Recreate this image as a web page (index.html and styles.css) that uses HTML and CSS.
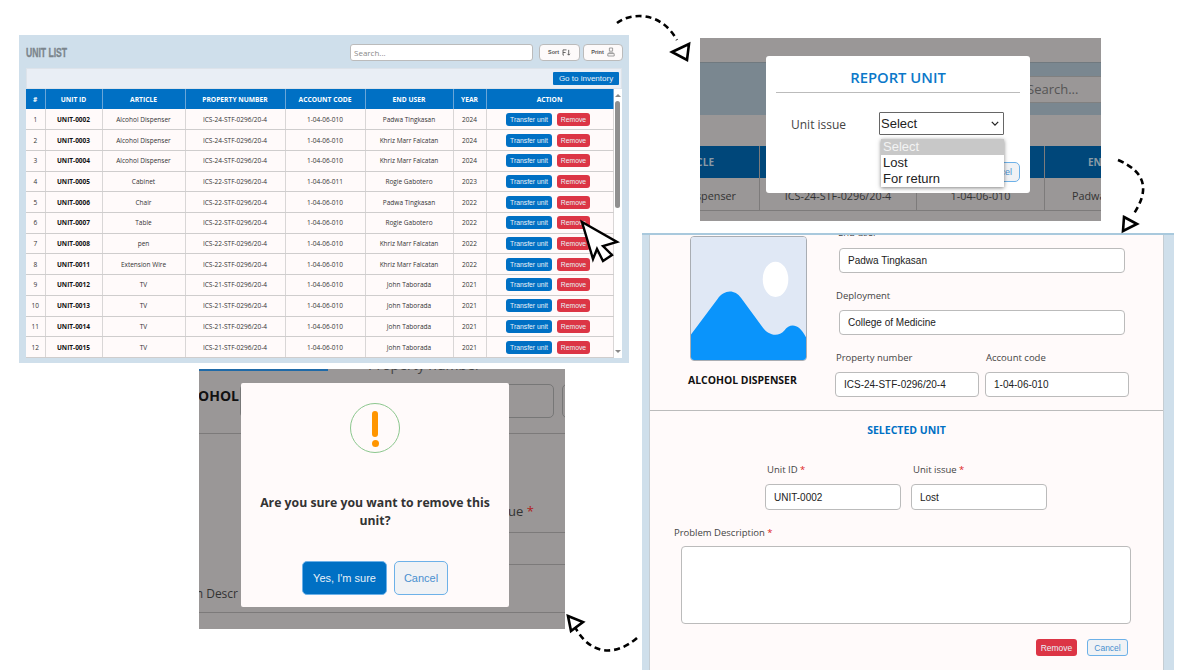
FILE: index.html
```html
<!DOCTYPE html>
<html lang="en">
<head>
    <meta charset="UTF-8">
    <meta name="viewport" content="width=device-width, initial-scale=1.0">
    <title>Unit List</title>
    <link rel="stylesheet" href="styles.css">
</head>
<body>
<div class="canvas">

    <!-- unit list window -->
    <section class="win list-win">
        <div class="list-head">
            <h2 class="list-title"><span>UNIT LIST</span></h2>
            <input class="search" type="text" placeholder="Search...">
            <button class="tool-btn tool-sort">Sort
                <svg viewBox="0 0 10 8" width="9" height="7"><path d="M1 1h4M1 1v6M1 4h3M1 7h1M7.5 1v6M6 5.5L7.5 7 9 5.5" fill="none" stroke="#555" stroke-width="1"/></svg>
            </button>
            <button class="tool-btn tool-print">Print
                <svg viewBox="0 0 10 12" width="8" height="10"><path d="M3 1h4v4H3zM2 7h6M1 8h8v3H1z" fill="none" stroke="#888" stroke-width="1"/></svg>
            </button>
        </div>
        <div class="list-bar"><button class="btn-blue btn-inventory">Go to inventory</button></div>
        <div class="table-wrap">
            <table class="units">
                <colgroup>
                    <col class="c-no"><col class="c-id"><col class="c-art"><col class="c-prop"><col class="c-acc"><col class="c-user"><col class="c-year"><col class="c-act">
                </colgroup>
                <thead>
                    <tr><th>#</th><th>UNIT ID</th><th>ARTICLE</th><th>PROPERTY NUMBER</th><th>ACCOUNT CODE</th><th>END USER</th><th>YEAR</th><th>ACTION</th></tr>
                </thead>
                <tbody>
                    <tr><td>1</td><td class="uid">UNIT-0002</td><td>Alcohol Dispenser</td><td>ICS-24-STF-0296/20-4</td><td>1-04-06-010</td><td>Padwa Tingkasan</td><td>2024</td><td class="act"><button class="btn-blue">Transfer unit</button><button class="btn-red">Remove</button></td></tr>
                    <tr><td>2</td><td class="uid">UNIT-0003</td><td>Alcohol Dispenser</td><td>ICS-24-STF-0296/20-4</td><td>1-04-06-010</td><td>Khriz Marr Falcatan</td><td>2024</td><td class="act"><button class="btn-blue">Transfer unit</button><button class="btn-red">Remove</button></td></tr>
                    <tr><td>3</td><td class="uid">UNIT-0004</td><td>Alcohol Dispenser</td><td>ICS-24-STF-0296/20-4</td><td>1-04-06-010</td><td>Khriz Marr Falcatan</td><td>2024</td><td class="act"><button class="btn-blue">Transfer unit</button><button class="btn-red">Remove</button></td></tr>
                    <tr><td>4</td><td class="uid">UNIT-0005</td><td>Cabinet</td><td>ICS-22-STF-0296/20-4</td><td>1-04-06-011</td><td>Rogie Gabotero</td><td>2023</td><td class="act"><button class="btn-blue">Transfer unit</button><button class="btn-red">Remove</button></td></tr>
                    <tr><td>5</td><td class="uid">UNIT-0006</td><td>Chair</td><td>ICS-22-STF-0296/20-4</td><td>1-04-06-010</td><td>Padwa Tingkasan</td><td>2022</td><td class="act"><button class="btn-blue">Transfer unit</button><button class="btn-red">Remove</button></td></tr>
                    <tr><td>6</td><td class="uid">UNIT-0007</td><td>Table</td><td>ICS-22-STF-0296/20-4</td><td>1-04-06-010</td><td>Rogie Gabotero</td><td>2022</td><td class="act"><button class="btn-blue">Transfer unit</button><button class="btn-red">Remove</button></td></tr>
                    <tr><td>7</td><td class="uid">UNIT-0008</td><td>pen</td><td>ICS-22-STF-0296/20-4</td><td>1-04-06-010</td><td>Khriz Marr Falcatan</td><td>2022</td><td class="act"><button class="btn-blue">Transfer unit</button><button class="btn-red">Remove</button></td></tr>
                    <tr><td>8</td><td class="uid">UNIT-0011</td><td>Extension Wire</td><td>ICS-22-STF-0296/20-4</td><td>1-04-06-010</td><td>Khriz Marr Falcatan</td><td>2022</td><td class="act"><button class="btn-blue">Transfer unit</button><button class="btn-red">Remove</button></td></tr>
                    <tr><td>9</td><td class="uid">UNIT-0012</td><td>TV</td><td>ICS-21-STF-0296/20-4</td><td>1-04-06-010</td><td>John Taborada</td><td>2021</td><td class="act"><button class="btn-blue">Transfer unit</button><button class="btn-red">Remove</button></td></tr>
                    <tr><td>10</td><td class="uid">UNIT-0013</td><td>TV</td><td>ICS-21-STF-0296/20-4</td><td>1-04-06-010</td><td>John Taborada</td><td>2021</td><td class="act"><button class="btn-blue">Transfer unit</button><button class="btn-red">Remove</button></td></tr>
                    <tr><td>11</td><td class="uid">UNIT-0014</td><td>TV</td><td>ICS-21-STF-0296/20-4</td><td>1-04-06-010</td><td>John Taborada</td><td>2021</td><td class="act"><button class="btn-blue">Transfer unit</button><button class="btn-red">Remove</button></td></tr>
                    <tr><td>12</td><td class="uid">UNIT-0015</td><td>TV</td><td>ICS-21-STF-0296/20-4</td><td>1-04-06-010</td><td>John Taborada</td><td>2021</td><td class="act"><button class="btn-blue">Transfer unit</button><button class="btn-red">Remove</button></td></tr>
                </tbody>
            </table>
            <div class="scrollbar">
                <span class="arrow-up"></span>
                <span class="thumb"></span>
                <span class="arrow-down"></span>
            </div>
        </div>
    </section>

    <!-- report unit window -->
    <section class="win report-win">
        <div class="rp-gap"></div>
        <div class="rp-band"><span class="rp-search">Search...</span></div>
        <div class="rp-gray"></div>
        <div class="rp-row rp-header">
            <span class="rp-cell rp-c1">ARTICLE</span>
            <span class="rp-cell"></span>
            <span class="rp-cell"></span>
            <span class="rp-cell rp-c4">END USER</span>
        </div>
        <div class="rp-row rp-data">
            <span class="rp-cell rp-c1b">Alcohol Dispenser</span>
            <span class="rp-cell rp-mid">ICS-24-STF-0296/20-4</span>
            <span class="rp-cell rp-mid">1-04-06-010</span>
            <span class="rp-cell rp-c4b">Padwa Tingkasan</span>
        </div>
        <div class="report-modal">
            <h3 class="report-title">REPORT UNIT</h3>
            <div class="report-field">
                <label class="report-label">Unit issue</label>
                <div class="select-box">
                    <select class="report-select"><option>Select</option></select>
                    <svg class="chevron" viewBox="0 0 10 6" width="8" height="5"><path d="M1 1l4 4 4-4" fill="none" stroke="#222" stroke-width="1.6"/></svg>
                </div>
            </div>
            <div class="report-foot"><button class="btn-ghost">Cancel</button></div>
            <ul class="dropdown">
                <li class="active">Select</li>
                <li>Lost</li>
                <li>For return</li>
            </ul>
        </div>
    </section>

    <!-- selected unit form window -->
    <section class="win form-win">
        <div class="form-inner">
            <div class="form-top">
                <div class="unit-pic">
                    <svg class="pic" viewBox="0 0 117 125" width="117" height="125">
                        <rect width="117" height="125" fill="#e0e8f5"/>
                        <ellipse cx="86" cy="43" rx="13" ry="18" fill="#fff"/>
                        <path d="M0 99L27 63C33 54 44 52 51 62L73 92C78 99 88 103 95 95C101 87 110 88 117 102V125H0Z" fill="#0a94fb"/>
                    </svg>
                    <div class="unit-name">ALCOHOL DISPENSER</div>
                </div>
                <div class="unit-fields">
                    <label class="lbl lbl-clipped">End user</label>
                    <input class="box box-wide" value="Padwa Tingkasan">
                    <label class="lbl lbl-dep">Deployment</label>
                    <input class="box box-wide" value="College of Medicine">
                    <div class="two-col">
                        <div>
                            <label class="lbl lbl-prop">Property number</label>
                            <input class="box box-half" value="ICS-24-STF-0296/20-4">
                        </div>
                        <div>
                            <label class="lbl lbl-prop">Account code</label>
                            <input class="box box-half" value="1-04-06-010">
                        </div>
                    </div>
                </div>
            </div>
            <div class="form-bottom">
                <h4 class="selected-title">SELECTED UNIT</h4>
                <div class="sel-row">
                    <div>
                        <label class="lbl lbl-sel">Unit ID <b>*</b></label>
                        <input class="box box-sel" value="UNIT-0002">
                    </div>
                    <div>
                        <label class="lbl lbl-sel">Unit issue <b>*</b></label>
                        <input class="box box-sel" value="Lost">
                    </div>
                </div>
                <label class="lbl lbl-desc">Problem Description <b>*</b></label>
                <textarea class="box desc"></textarea>
                <div class="form-actions">
                    <button class="btn-red btn-form">Remove</button>
                    <button class="btn-ghost btn-form">Cancel</button>
                </div>
            </div>
        </div>
    </section>

    <!-- remove confirmation window -->
    <section class="win confirm-win">
        <div class="bk-bar"></div>
        <div class="bk-label">Property number</div>
        <div class="bk-row">
            <span class="bk-name">ALCOHOL</span>
            <span class="bk-input"></span>
            <span class="bk-input2"></span>
        </div>
        <div class="bk-mid">ue <b>*</b></div>
        <div class="bk-field"></div>
        <div class="bk-desc"><span>Problem Descr</span></div>
        <div class="confirm-modal">
            <div class="alert-ring"><span class="alert-bar"></span><span class="alert-dot"></span></div>
            <p class="confirm-text">Are you sure you want to remove this unit?</p>
            <div class="confirm-actions">
                <button class="btn-yes">Yes, I'm sure</button>
                <button class="btn-ghost btn-no">Cancel</button>
            </div>
        </div>
    </section>

    <!-- dashed arrows and the pointer drawn over the windows -->
    <svg class="overlay" viewBox="0 0 1183 670" width="1183" height="670">
        <g fill="none" stroke="#000" stroke-width="2.6">
            <path d="M617 23C630 13 660 10 677 40" stroke-dasharray="6 4"/>
            <path d="M672 52L689 44L687 60Z"/>
            <path d="M1118 160C1146 172 1150 190 1133 215" stroke-dasharray="6 4"/>
            <path d="M1124 217L1137 224L1123 231Z"/>
            <path d="M637 638C615 657 590 655 575 627" stroke-dasharray="6 4"/>
            <path d="M568 616L583 622L571 631Z"/>
        </g>
        <path d="M582 222L617 242L603 246L612 255L603 261L597 249L593 259Z" fill="#fff" stroke="#000" stroke-width="2.4" stroke-linejoin="miter"/>
    </svg>
</div>
</body>
</html>
```

FILE: styles.css
```css
* {
    box-sizing: border-box;
}
body {
    margin: 0;
    background: white;
    font-family: "Liberation Sans", Arial, sans-serif;
}
button {
    font-family: "Liberation Sans", Arial, sans-serif;
    cursor: pointer;
}
.canvas {
    position: relative;
    width: 1183px;
    height: 670px;
    overflow: hidden;
    background: white;
}
.win {
    position: absolute;
    overflow: hidden;
}
.overlay {
    position: absolute;
    left: 0;
    top: 0;
    pointer-events: none;
}

/* unit list */
.list-win {
    left: 19px;
    top: 35px;
    width: 610px;
    height: 328px;
    padding: 0 7px;
    background: #cfdfeb;
}
.list-head {
    display: flex;
    align-items: center;
    height: 33px;
    margin-right: -1px;
    padding-top: 1px;
}
.list-title {
    margin: 0 auto 0 0;
    font-size: 13px;
    font-weight: bold;
    color: #7b858c;
    -webkit-text-stroke: 0.4px #7b858c;
}
.list-title span {
    display: inline-block;
    transform: scaleX(0.66);
    transform-origin: left center;
}
.search {
    width: 183px;
    height: 17px;
    padding: 0 3px;
    font-size: 8px;
    font-family: "Open Sans", sans-serif;
    background: white;
    border: 1px solid #bbb;
    border-radius: 3px;
}
.search::placeholder {
    color: #888;
}
.tool-btn {
    display: flex;
    align-items: center;
    justify-content: center;
    gap: 3px;
    width: 41px;
    height: 17px;
    margin-left: 3px;
    padding: 0;
    font-size: 5.5px;
    font-weight: bold;
    color: #555;
    background: #fdfafa;
    border: 1px solid #bbb;
    border-radius: 4px;
}
.tool-sort {
    margin-left: 6px;
}
.tool-print {
    width: 40px;
}
.list-bar {
    display: flex;
    justify-content: flex-end;
    align-items: center;
    height: 21px;
    padding-right: 2px;
    background: #e9eef5;
    border: 1px solid #dde3ea;
}
.table-wrap {
    display: flex;
    height: 269px;
    overflow: hidden;
    background: #fffafa;
}
.units {
    flex: none;
    width: 587px;
    height: 269px;
    table-layout: fixed;
    border-collapse: collapse;
    font-family: "Open Sans", sans-serif;
    font-size: 6.5px;
    color: #333;
}
.c-no { width: 19px; }
.c-id { width: 57px; }
.c-art { width: 83px; }
.c-prop { width: 100px; }
.c-acc { width: 80px; }
.c-user { width: 88px; }
.c-year { width: 33px; }
.c-act { width: 127px; }
.units th {
    height: 20px;
    padding: 0;
    font-size: 6.7px;
    font-weight: bold;
    color: white;
    background: #0070c4;
    border-right: 1px solid #6aa6d8;
}
.units td {
    height: 20.7px;
    padding: 0;
    text-align: center;
    white-space: nowrap;
    background: #fffafa;
    border-right: 1px solid #d9d6d6;
    border-bottom: 1px solid #cfcdcd;
}
.units .uid {
    font-weight: bold;
    color: #111;
}
.units .act {
    padding-right: 3px;
}
.btn-blue,
.btn-red {
    height: 13px;
    padding: 0;
    font-size: 6.8px;
    color: #e8f1f8;
    border: none;
    border-radius: 3px;
}
.btn-blue {
    width: 46px;
    background: #0070c4;
}
.btn-red {
    width: 33px;
    margin-left: 5px;
    background: #dc3545;
}
.btn-inventory {
    width: 66px;
    height: 13px;
    font-size: 8px;
    border-radius: 1px;
}
.scrollbar {
    flex: 1;
    display: flex;
    flex-direction: column;
    align-items: center;
    background: white;
}
.arrow-up,
.arrow-down {
    flex: none;
    width: 0;
    height: 0;
    border-left: 3px solid transparent;
    border-right: 3px solid transparent;
}
.arrow-up {
    margin-top: 5px;
    border-bottom: 3px solid #888;
}
.arrow-down {
    margin-top: auto;
    margin-bottom: 5px;
    border-top: 3px solid #888;
}
.thumb {
    width: 5px;
    height: 107px;
    margin-top: 4px;
    background: #8f8f8f;
    border-radius: 3px;
}

/* report unit */
.report-win {
    left: 700px;
    top: 38px;
    width: 401px;
    height: 183px;
    background: #9a9797;
    font-family: "Open Sans", sans-serif;
    font-size: 12px;
    color: #333;
}
.rp-gap {
    height: 24px;
}
.rp-band {
    display: flex;
    align-items: center;
    height: 53px;
    padding-left: 327px;
    background: #7a8790;
    border-top: 1px solid #70797f;
}
.rp-search {
    flex: 1;
    height: 27px;
    font-size: 13px;
    line-height: 25px;
    color: #555;
    background: #9a9797;
    border-top: 1px solid #808080;
    border-bottom: 1px solid #808080;
}
.rp-gray {
    height: 31px;
}
.rp-row {
    display: grid;
    grid-template-columns: 60px 157px 128px 56px;
}
.rp-cell {
    display: flex;
    align-items: center;
    overflow: visible;
    white-space: nowrap;
    border-right: 1px solid #7d7b7b;
}
.rp-header {
    height: 32px;
    font-size: 10px;
    font-weight: bold;
    color: #8a9aa5;
    background: #00477a;
}
.rp-data {
    height: 33px;
    font-size: 10.8px;
    border-bottom: 1px solid #7d7b7b;
}
.rp-data .rp-cell {
    padding-top: 3px;
}
.rp-c1 {
    justify-content: flex-end;
    padding-right: 45px;
}
.rp-c1b {
    justify-content: flex-end;
    padding-right: 23px;
}
.rp-mid {
    justify-content: center;
}
.rp-c4 {
    padding-left: 43px;
    border-right: none;
}
.rp-c4b {
    padding-left: 27px;
    border-right: none;
}
.report-modal {
    position: absolute;
    left: 66px;
    top: 18px;
    width: 264px;
    height: 137px;
    padding: 0 10px;
    background: white;
    border-radius: 3px;
}
.report-title {
    height: 37px;
    margin: 0;
    font-size: 14.8px;
    font-weight: 600;
    line-height: 43px;
    text-align: center;
    color: #0b78c9;
    border-bottom: 1px solid #bbb;
}
.report-field {
    display: flex;
    align-items: center;
    margin-top: 19px;
    padding-left: 15px;
}
.report-label {
    width: 88px;
    padding-top: 2px;
    color: #444;
}
.select-box {
    position: relative;
    width: 125px;
    height: 23px;
}
.report-select {
    width: 100%;
    height: 100%;
    padding: 0 0 0 1px;
    appearance: none;
    font-family: "Liberation Sans", sans-serif;
    font-size: 13px;
    color: #222;
    background: white;
    border: 1px solid #666;
    border-radius: 1px;
}
.chevron {
    position: absolute;
    right: 5px;
    top: 9px;
    pointer-events: none;
}
.report-foot {
    display: flex;
    justify-content: flex-end;
    margin-top: 27px;
}
.btn-ghost {
    color: #4a90d0;
    background: #f0f2f5;
    border: 1px solid #6db1e8;
    border-radius: 5px;
}
.report-foot .btn-ghost {
    width: 44px;
    height: 20px;
    font-size: 9px;
}
.dropdown {
    position: absolute;
    left: 115px;
    top: 83px;
    width: 123px;
    margin: 0;
    padding: 0;
    list-style: none;
    font-family: "Liberation Sans", sans-serif;
    font-size: 13px;
    line-height: 16px;
    color: #222;
    background: white;
    box-shadow: 0 1px 4px rgba(0, 0, 0, 0.5);
}
.dropdown li {
    padding-left: 2px;
}
.dropdown .active {
    color: #f3f3f3;
    background: #c8c8c8;
}

/* selected unit form */
.form-win {
    left: 642px;
    top: 233px;
    width: 532px;
    height: 437px;
    padding: 0 10px 0 7px;
    background: #cfdfeb;
    border-top: 2px solid #a9c9dd;
}
.form-inner {
    height: 100%;
    background: #fffafa;
    border-left: 1px solid #c5cdd3;
    border-right: 1px solid #c5cdd3;
    font-family: "Open Sans", sans-serif;
}
.form-top {
    display: flex;
    height: 176px;
    border-bottom: 1px solid #bbb;
}
.unit-pic {
    width: 186px;
    padding: 1px 0 0 40px;
}
.pic {
    display: block;
    border: 1px solid #a9adb3;
    border-radius: 4px;
}
.unit-name {
    width: 117px;
    margin: 12px 0 0 -2px;
    font-size: 10.4px;
    font-weight: bold;
    line-height: 14px;
    white-space: nowrap;
    color: #111;
}
.lbl {
    display: block;
    font-size: 9.5px;
    line-height: 13px;
    color: #444;
}
.lbl b {
    font-weight: normal;
    color: #d22;
}
.lbl-clipped {
    height: 13px;
    margin-top: -9px;
    padding-left: 2px;
}
.lbl-dep {
    margin-top: 16px;
    margin-bottom: 8px;
}
.lbl-prop {
    margin-top: 16px;
    margin-bottom: 8px;
}
.box {
    display: block;
    font-family: "Liberation Sans", sans-serif;
    font-size: 10px;
    color: #222;
    background: white;
    border: 1px solid #bbb;
    border-radius: 4px;
    outline: none;
}
.box-wide {
    width: 286px;
    height: 25px;
    margin-top: 1px;
    margin-left: 3px;
    padding: 0 8px;
}
.lbl-clipped + .box-wide {
    margin-top: 9px;
}
.two-col {
    display: flex;
    gap: 6px;
    margin-left: -1px;
}
.two-col .lbl {
    padding-left: 1px;
}
.box-half {
    width: 144px;
    height: 25px;
    padding: 0 8px;
}
.selected-title {
    margin: 13px 0 0;
    font-size: 10.5px;
    font-weight: bold;
    line-height: 12px;
    text-align: center;
    color: #0070c4;
}
.sel-row {
    display: flex;
    gap: 10px;
    margin-top: 27px;
    padding-left: 115px;
}
.lbl-sel {
    margin-bottom: 8px;
    padding-left: 2px;
}
.box-sel {
    width: 136px;
    height: 26px;
    padding: 0 8px;
}
.lbl-desc {
    margin-top: 16px;
    padding-left: 24px;
}
.desc {
    width: 450px;
    height: 78px;
    margin: 7px 0 0 31px;
    resize: none;
}
.form-actions {
    display: flex;
    justify-content: flex-end;
    gap: 10px;
    margin-top: 15px;
    padding-right: 35px;
}
.btn-form {
    width: 41px;
    height: 17px;
    margin: 0;
    padding: 0;
    font-size: 8.5px;
    border-radius: 3px;
}

/* remove confirmation */
.confirm-win {
    left: 199px;
    top: 369px;
    width: 366px;
    height: 260px;
    background: #9a9797;
    font-family: "Open Sans", sans-serif;
    font-size: 13px;
    color: #222;
}
.bk-bar {
    width: 129px;
    height: 2px;
    background: #1f6aa8;
}
.bk-label {
    height: 0;
    margin-top: -16px;
    padding-left: 169px;
    font-size: 14px;
    line-height: 19px;
    color: #444;
}
.bk-row {
    display: flex;
    align-items: flex-start;
    height: 65px;
    margin-top: 14px;
    padding-top: 15px;
    border-bottom: 1px solid #7c7a7a;
}
.bk-name {
    display: flex;
    justify-content: flex-end;
    flex: none;
    width: 40px;
    margin-top: 2px;
    font-size: 14px;
    font-weight: bold;
    line-height: 20px;
    color: #111;
}
.bk-input {
    flex: none;
    width: 314px;
    height: 34px;
    margin-left: 1px;
    border: 1px solid #777;
    border-radius: 5px;
}
.bk-input2 {
    flex: none;
    width: 30px;
    height: 34px;
    margin-left: 8px;
    border: 1px solid #777;
    border-radius: 5px;
}
.bk-mid {
    height: 98px;
    padding: 68px 0 0 309px;
    font-size: 13px;
    line-height: 18px;
    color: #333;
}
.bk-mid b {
    font-weight: normal;
    color: #b02020;
}
.bk-field {
    width: 116px;
    height: 33px;
    margin-left: 250px;
    border-top: 1px solid #7c7a7a;
    border-bottom: 1px solid #7c7a7a;
}
.bk-desc {
    height: 48px;
    border-bottom: 1px solid #7c7a7a;
}
.bk-desc span {
    display: flex;
    justify-content: flex-end;
    width: 39px;
    padding-top: 20px;
    font-size: 12px;
    line-height: 18px;
    white-space: nowrap;
    color: #333;
}
.confirm-modal {
    position: absolute;
    left: 42px;
    top: 14px;
    width: 268px;
    height: 224px;
    background: #fffafa;
    border-radius: 2px;
}
.alert-ring {
    display: flex;
    flex-direction: column;
    align-items: center;
    width: 50px;
    height: 50px;
    margin: 20px auto 0;
    padding-top: 7px;
    border: 1px solid #8cc78e;
    border-radius: 50%;
}
.alert-bar {
    width: 6px;
    height: 26px;
    background: #ff9500;
    border-radius: 3px;
}
.alert-dot {
    width: 7px;
    height: 7px;
    margin-top: 3px;
    background: #ff9500;
    border-radius: 50%;
}
.confirm-text {
    margin: 41px 14px 0;
    font-size: 12.25px;
    font-weight: bold;
    line-height: 18px;
    text-align: center;
    color: #333;
}
.confirm-actions {
    display: flex;
    justify-content: center;
    gap: 7px;
    margin-top: 31px;
}
.btn-yes {
    width: 85px;
    height: 34px;
    padding: 0;
    font-size: 11px;
    color: #e8f1f8;
    background: #0070c4;
    border: 1px solid #6db1e8;
    border-radius: 5px;
}
.btn-no {
    width: 54px;
    height: 34px;
    padding: 0;
    font-size: 11px;
}
```
